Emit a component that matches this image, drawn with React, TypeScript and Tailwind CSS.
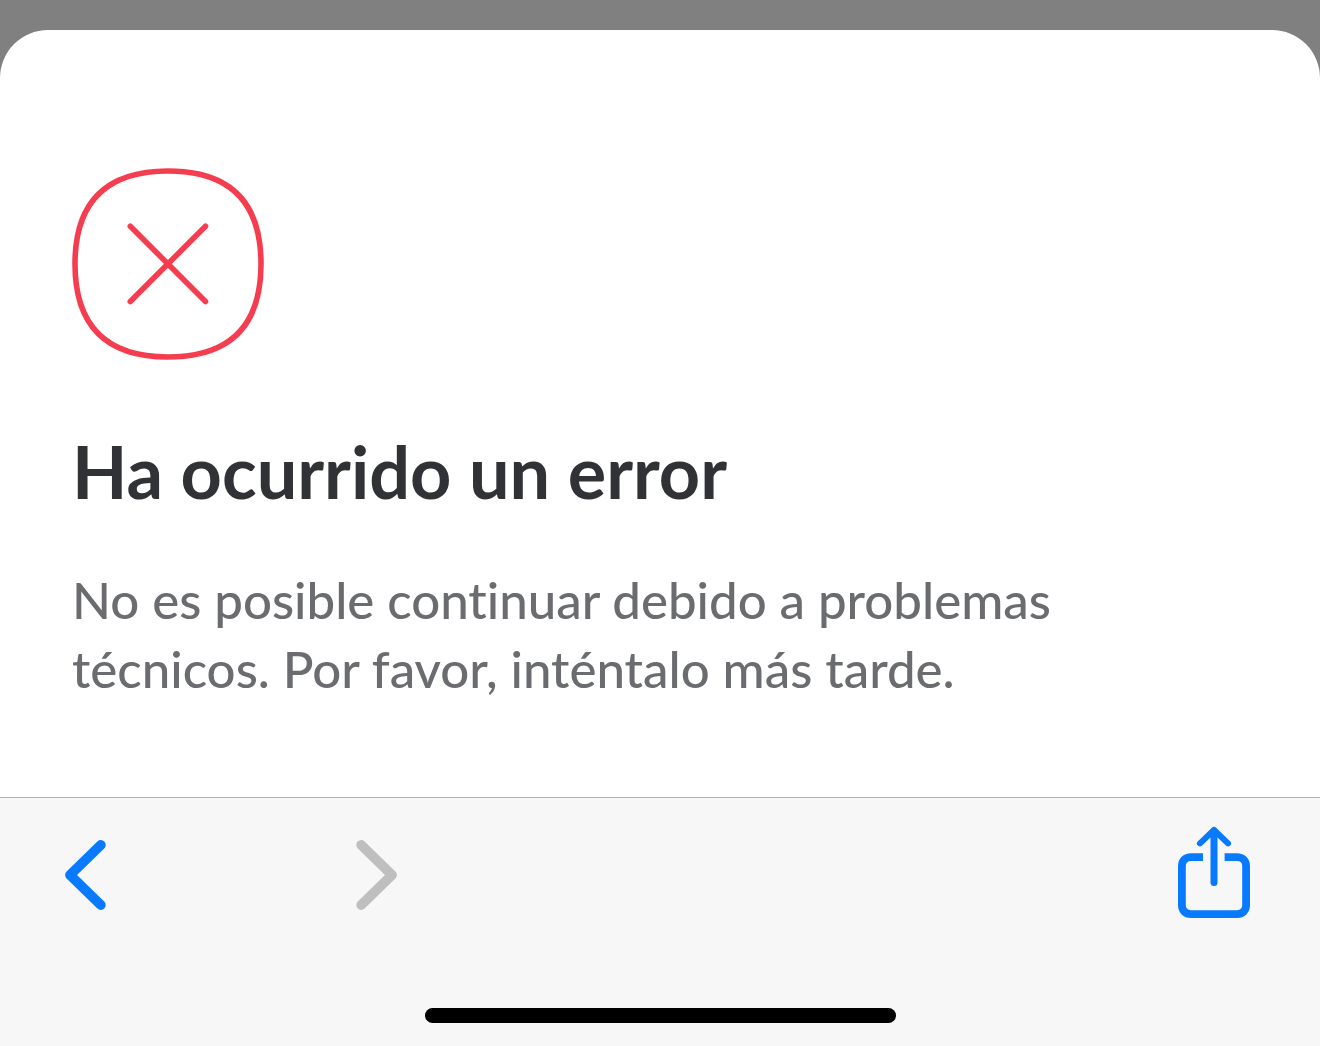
import React from 'react';

const ErrorIcon = () => (
  <svg
    className="size-48"
    viewBox="0 0 192 192"
    fill="none"
    stroke="#f43e4f"
    strokeWidth="5.6"
    strokeLinecap="round"
    aria-hidden="true"
  >
    <path d="M96 3C158 3 189 34 189 96C189 158 158 189 96 189C34 189 3 158 3 96C3 34 34 3 96 3Z" />
    <path d="M58.3 58.3L133.5 133.5M133.5 58.3L58.3 133.5" />
  </svg>
);

const Chevron: React.FC<{ direction: 'left' | 'right' }> = ({ direction }) => (
  <svg
    className="h-[92px] w-11"
    viewBox="0 0 44 92"
    fill="none"
    stroke="currentColor"
    strokeWidth="9.8"
    strokeLinecap="round"
    strokeLinejoin="round"
    aria-hidden="true"
  >
    <path d={direction === 'left' ? 'M36.8 19L6 49L36.8 79' : 'M7.2 19L38 49L7.2 79'} />
  </svg>
);

const ShareIcon = () => (
  <svg className="h-[92px] w-[72px]" viewBox="0 0 72 92" fill="none" stroke="currentColor" aria-hidden="true">
    <path
      strokeWidth="7.8"
      d="M25 31.2H13C7.4 31.2 3.9 34.6 3.9 40.2V79.1C3.9 84.7 7.4 88.1 13 88.1H59C64.6 88.1 68.1 84.7 68.1 79.1V40.2C68.1 34.6 64.6 31.2 59 31.2H46.6"
    />
    <path strokeWidth="7" strokeLinecap="round" d="M36 5V56.4" />
    <path strokeWidth="6" strokeLinecap="round" strokeLinejoin="round" d="M22 17.4L36 4L50 17.4" />
  </svg>
);

export default function App() {
  return (
    <div className="flex min-h-screen flex-col bg-[#808080] pt-[30px] font-['Lato',sans-serif]">
      <main className="flex-1 rounded-t-[48px] bg-white px-[72px] pt-[138px] pb-10">
        <ErrorIcon />
        <h1 className="mt-[67px] text-[72px] leading-[88px] font-bold text-[#303236]">Ha ocurrido un error</h1>
        <p className="mt-[50px] max-w-[1080px] text-[51px] leading-[69px] font-medium text-[#6b6c6f] [font-variant-ligatures:none]">
          No es posible continuar debido a problemas técnicos. Por favor, inténtalo más tarde.
        </p>
      </main>

      <footer className="border-t border-[#b0b0b0] bg-[#f7f7f7] pt-7 pb-[23px]">
        <nav className="flex items-center pr-[70px] pl-16" aria-label="Navegación">
          <button type="button" aria-label="Atrás" className="text-[#087aff]">
            <Chevron direction="left" />
          </button>
          <button type="button" aria-label="Adelante" disabled className="ml-[246px] text-[#bfbfbf]">
            <Chevron direction="right" />
          </button>
          <button type="button" aria-label="Compartir" className="ml-auto text-[#087aff]">
            <ShareIcon />
          </button>
        </nav>
        <div className="mx-auto mt-[90px] h-[15px] w-[471px] rounded-full bg-black" />
      </footer>
    </div>
  );
}
